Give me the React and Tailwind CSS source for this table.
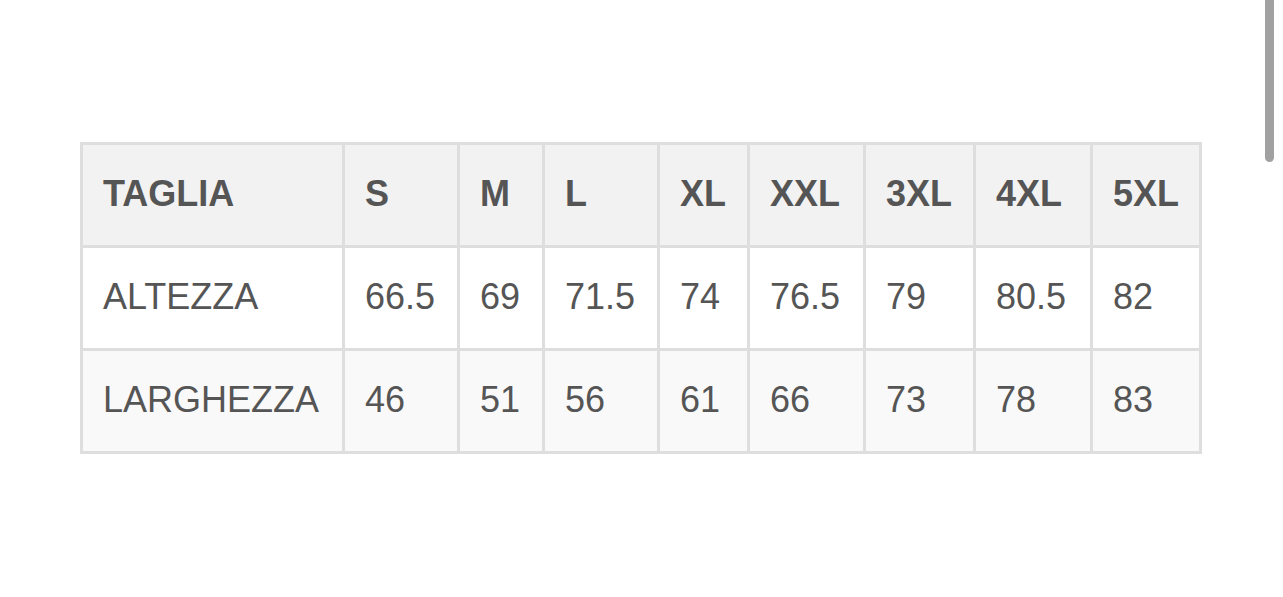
const HEAD = ["TAGLIA", "S", "M", "L", "XL", "XXL", "3XL", "4XL", "5XL"];
const ROWS = [
  { bg: "bg-white", cells: ["ALTEZZA", "66.5", "69", "71.5", "74", "76.5", "79", "80.5", "82"] },
  { bg: "bg-[#f9f9f9]", cells: ["LARGHEZZA", "46", "51", "56", "61", "66", "73", "78", "83"] },
];
const WIDTHS = [262, 115, 85, 115, 90, 116, 110, 117, 109];

export default function App() {
  return (
    <div
      className="relative w-[1283px] h-[597px] bg-white overflow-hidden text-[#555]"
      style={{ fontFamily: '"Liberation Sans", Arial, sans-serif' }}
    >
      <div className="pt-[142px] pl-[80px]">
        <table className="table-fixed border-collapse w-[1119px]">
          <colgroup>
            {WIDTHS.map((w, i) => (
              <col key={i} style={{ width: w }} />
            ))}
          </colgroup>
          <thead>
            <tr className="bg-[#f2f2f2] h-[103px]">
              {HEAD.map((h) => (
                <th
                  key={h}
                  className="border-[3px] border-[#dedede] pl-[20px] pr-0 pb-[3px] text-left font-bold text-[36px] leading-none whitespace-nowrap"
                >
                  {h}
                </th>
              ))}
            </tr>
          </thead>
          <tbody>
            {ROWS.map((r) => (
              <tr key={r.cells[0]} className={`${r.bg} h-[103px]`}>
                {r.cells.map((c, i) => (
                  <td
                    key={i}
                    className="border-[3px] border-[#dedede] pl-[20px] pr-0 pb-[3px] text-left text-[36px] leading-none whitespace-nowrap"
                  >
                    {c}
                  </td>
                ))}
              </tr>
            ))}
          </tbody>
        </table>
      </div>
      <div className="absolute left-[1265px] top-0 w-[9px] h-[162px] rounded-b-full bg-[#a1a1a1]" />
    </div>
  );
}
